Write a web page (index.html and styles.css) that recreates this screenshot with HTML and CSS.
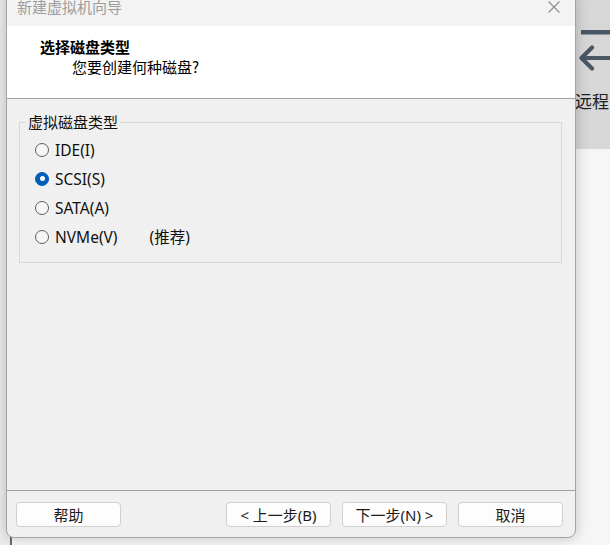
FILE: index.html
```html
<!DOCTYPE html>
<html lang="zh-CN">
<head>
<meta charset="utf-8">
<title>新建虚拟机向导</title>
<link rel="stylesheet" href="styles.css">
</head>
<body>
<div class="screen">
  <div class="backdrop">
    <div class="bg-left"></div>
    <div class="bg-main"></div>
    <div class="bg-side">
      <div class="nav">
        <svg class="nav-icon" width="34" height="80" viewBox="0 0 34 80">
          <rect x="5" y="30" width="29" height="4.5" fill="#4a5764"/>
          <path d="M5.5 58 H34 M16 47.5 L5.5 58 L16 68.5" fill="none" stroke="#4a5764" stroke-width="4.2" stroke-linecap="round" stroke-linejoin="round"/>
        </svg>
        <span class="nav-label">远程</span>
      </div>
      <div class="side-rest"></div>
    </div>
  </div>

  <div class="dialog">
    <div class="titlebar">
      <span class="title">新建虚拟机向导</span>
      <svg class="close" width="12" height="12" viewBox="0 0 12 12">
        <path d="M0.5 0.5 L11.5 11.5 M11.5 0.5 L0.5 11.5" stroke="#8c8c8c" stroke-width="1.1" fill="none"/>
      </svg>
    </div>
    <div class="header">
      <div class="h-title">选择磁盘类型</div>
      <div class="h-sub">您要创建何种磁盘?</div>
    </div>
    <div class="body">
      <fieldset class="group">
        <legend class="group-label">虚拟磁盘类型</legend>
        <div class="option"><span class="radio"></span><span class="opt-text">IDE(I)</span></div>
        <div class="option"><span class="radio checked"></span><span class="opt-text">SCSI(S)</span></div>
        <div class="option"><span class="radio"></span><span class="opt-text">SATA(A)</span></div>
        <div class="option"><span class="radio"></span><span class="opt-text nvme">NVMe(V)</span><span class="opt-text">(推荐)</span></div>
      </fieldset>
    </div>
    <div class="footer">
      <button class="btn help">帮助</button>
      <button class="btn">&lt; 上一步(B)</button>
      <button class="btn">下一步(N) &gt;</button>
      <button class="btn">取消</button>
    </div>
  </div>
</div>
</body>
</html>
```
FILE: styles.css
```css
* { box-sizing: border-box; }
html, body { margin: 0; padding: 0; }
body {
  width: 610px;
  height: 545px;
  overflow: hidden;
  font-family: "Noto Sans", "Noto Sans CJK SC", sans-serif;
  background: #f4f4f4;
}
.screen {
  position: relative;
  width: 610px;
  height: 545px;
  overflow: hidden;
}
.backdrop {
  position: absolute;
  inset: 0;
  display: flex;
}
.bg-left {
  width: 10px;
  background: #ececec;
}
.bg-main {
  flex: 1;
  background: #f7f7f7;
  border-left: 2px solid #6a6a6a;
}
.bg-side {
  width: 34px;
  display: flex;
  flex-direction: column;
}
.nav {
  height: 149px;
  background: #d7d7d7;
  position: relative;
}
.nav-icon { display: block; }
.nav-label {
  position: absolute;
  left: -1px;
  top: 90px;
  font-family: "Noto Sans CJK SC", sans-serif;
  font-size: 17px;
  line-height: 22px;
  color: #1e1e1e;
  white-space: nowrap;
}
.side-rest {
  flex: 1;
  background: #f6f6f6;
}

.dialog {
  position: absolute;
  left: 6px;
  top: -6px;
  width: 570px;
  height: 544px;
  border: 1px solid #a3a3a3;
  border-radius: 0 0 8px 8px;
  box-shadow: 0 0 14px rgba(0, 0, 0, 0.22);
  overflow: hidden;
  display: flex;
  flex-direction: column;
  background: #f0f0f0;
}
.titlebar {
  height: 31px;
  flex: none;
  background: #f3f3f3;
  display: flex;
  align-items: flex-start;
  padding: 2px 15px 0 10px;
}
.title {
  font-family: "Noto Sans CJK SC", sans-serif;
  font-size: 15px;
  line-height: 20px;
  color: #9d9d9d;
}
.close {
  margin-left: auto;
  margin-top: 4px;
}
.header {
  height: 73px;
  flex: none;
  background: #ffffff;
  border-bottom: 1px solid #a0a0a0;
  padding: 11px 0 0 33px;
  font-family: "Noto Sans CJK SC", sans-serif;
  font-size: 15px;
  line-height: 20px;
  color: #000;
}
.h-title { font-weight: bold; }
.h-sub { padding-left: 32px; }

.body {
  flex: 1;
  padding: 13px 13px 0 12px;
}
.group {
  margin: 0;
  border: 1px solid #d9d9d9;
  padding: 3px 0 11px 0;
  min-width: 0;
}
.group-label {
  margin-left: 6px;
  padding: 0 2px;
  font-family: "Noto Sans CJK SC", sans-serif;
  font-size: 15px;
  line-height: 20px;
  color: #111;
}
.option {
  height: 29px;
  display: flex;
  align-items: center;
  padding-left: 15px;
}
.radio {
  width: 14px;
  height: 14px;
  border: 1px solid #5e5e5e;
  border-radius: 50%;
  background: #f6f6f6;
  margin-right: 6px;
  position: relative;
  flex: none;
}
.radio.checked {
  background: #005fb8;
  border-color: #005fb8;
}
.radio.checked::after {
  content: "";
  position: absolute;
  left: 3.5px;
  top: 3.5px;
  width: 5px;
  height: 5px;
  border-radius: 50%;
  background: #fff;
}
.opt-text {
  font-size: 15.5px;
  line-height: 20px;
  color: #111;
}
.nvme { margin-right: 32px; }

.footer {
  flex: none;
  border-top: 1px solid #a0a0a0;
  padding: 11px 12px 10px 9px;
  display: flex;
  gap: 11px;
}
.btn {
  width: 105px;
  height: 25px;
  background: #fdfdfd;
  border: 1px solid #d0d0d0;
  border-radius: 4px;
  font-family: "Noto Sans", "Noto Sans CJK SC", sans-serif;
  font-size: 15px;
  line-height: 20px;
  color: #1b1b1b;
  padding: 0;
}
.help { margin-right: auto; }
```
